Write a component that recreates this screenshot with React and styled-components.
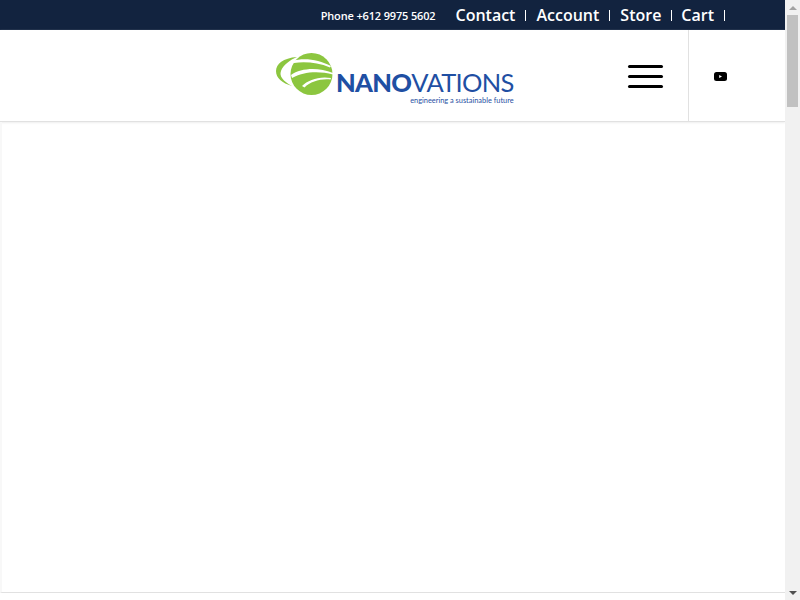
import React from 'react';
import styled, { createGlobalStyle } from 'styled-components';

const GlobalStyle = createGlobalStyle`
  html, body { margin: 0; padding: 0; background: #fff; overflow: hidden; }
  body { font-family: "Open Sans", "Liberation Sans", sans-serif; }
`;

const Shell = styled.div`
  height: 100vh;
  display: flex;
`;

const Page = styled.div`
  flex: 1;
  min-width: 0;
`;

const TopBar = styled.div`
  height: 30px;
  background: #12233f;
  color: #fff;
  display: flex;
  align-items: center;
  justify-content: flex-end;
  padding-right: 60px;
`;

const Phone = styled.span`
  font-size: 11px;
  font-weight: 600;
  letter-spacing: -0.15px;
  margin-right: 20px;
`;

const TopLink = styled.a`
  font-size: 16px;
  font-weight: 600;
  line-height: 11px;
  padding-right: 10px;
  margin-right: 10px;
  border-right: 1px solid #fff;
  &:last-child { margin: 0 0 0 -1px; }
`;

const Header = styled.header`
  height: 91px;
  display: flex;
  align-items: stretch;
  padding-left: 275px;
  border-bottom: 1px solid #e1e1e1;
  box-shadow: 0 1px 2px #eee;
`;

const LogoLink = styled.a`
  display: flex;
  align-items: flex-start;
  padding-top: 18px;
  margin-right: auto;
`;

const Wordmark = styled.div`
  display: flex;
  flex-direction: column;
  align-items: flex-end;
  padding-top: 21px;
  font-family: Lato, "Open Sans", sans-serif;
  color: #1f4fa3;
`;

const BrandName = styled.div`
  font-size: 25.5px;
  line-height: 26px;
  letter-spacing: -0.7px;
  font-weight: 400;
  white-space: nowrap;
  b { font-weight: 900; }
`;

const Tagline = styled.div`
  font-size: 7.4px;
  line-height: 10px;
  margin-top: 1px;
  white-space: nowrap;
`;

const Burger = styled.button`
  width: 35px;
  margin-right: 25px;
  padding: 2px 0 0;
  border: 0;
  background: none;
  display: flex;
  flex-direction: column;
  justify-content: center;
  gap: 7px;
`;

const BurgerLine = styled.span`
  display: block;
  height: 3px;
  border-radius: 2px;
  background: #000;
`;

const SocialCell = styled.div`
  width: 97px;
  box-sizing: border-box;
  border-left: 1px solid #e1e1e1;
  display: flex;
  align-items: center;
  padding: 2px 0 0 25px;
`;

const Main = styled.main`
  height: 470px;
  border-left: 2px solid #f8f8f8;
  border-bottom: 1px solid #e1e1e1;
`;

const ScrollRail = styled.div`
  width: 15px;
  flex: none;
  background: #f1f1f1;
  display: flex;
  flex-direction: column;
  align-items: center;
`;

const ScrollArrow = styled.div`
  height: 15px;
  width: 100%;
  display: flex;
  align-items: center;
  justify-content: center;
  flex: none;
  margin-top: ${p => (p.$down ? 'auto' : '0')};
  &::after {
    content: "";
    border-left: 4px solid transparent;
    border-right: 4px solid transparent;
    ${p => (p.$down ? 'border-top: 4px solid #505050;' : 'border-bottom: 4px solid #a3a3a3;')}
  }
`;

const ScrollThumb = styled.div`
  width: 11px;
  height: 92px;
  background: #c1c1c1;
`;

const Globe = () => (
  <svg width="61" height="48" viewBox="0 0 61 48" aria-hidden="true">
    <circle cx="36.5" cy="26" r="21" fill="#8cc63f" />
    <path d="M22 9C8 10 1 16 1 23c0 7 6 12 16 15-9-5-13-10-11-15 2-6 9-11 16-14z" fill="#8cc63f" />
    <path d="M17 13c13-4 27-1 39 5l-1 1.500c-12-5-25-6-36-4.500z" fill="#fff" />
    <path d="M16 27c10-7 27-8 42-2v1.500c-14-4-30-3-41 3.500z" fill="#fff" />
    <path d="M27 38c6-6 17-10 29-8l-.5 1.500c-10-1-20 2-26 8z" fill="#fff" />
  </svg>
);

const YouTubeIcon = () => (
  <svg width="13" height="9" viewBox="0 0 13 9" aria-hidden="true">
    <rect width="13" height="9" rx="2.500" fill="#000" />
    <path d="M5.200 3v3L8 4.500z" fill="#fff" />
  </svg>
);

const App = () => (
  <Shell>
    <GlobalStyle />
    <Page>
      <TopBar>
        <Phone>Phone +612 9975 5602</Phone>
        <TopLink>Contact</TopLink>
        <TopLink>Account</TopLink>
        <TopLink>Store</TopLink>
        <TopLink>Cart</TopLink>
      </TopBar>
      <Header>
        <LogoLink>
          <Globe />
          <Wordmark>
            <BrandName><b>NANO</b>VATIONS</BrandName>
            <Tagline>engineering a sustainable future</Tagline>
          </Wordmark>
        </LogoLink>
        <Burger aria-label="Menu">
          <BurgerLine />
          <BurgerLine />
          <BurgerLine />
        </Burger>
        <SocialCell><YouTubeIcon /></SocialCell>
      </Header>
      <Main />
    </Page>
    <ScrollRail>
      <ScrollArrow />
      <ScrollThumb />
      <ScrollArrow $down />
    </ScrollRail>
  </Shell>
);

export default App;
